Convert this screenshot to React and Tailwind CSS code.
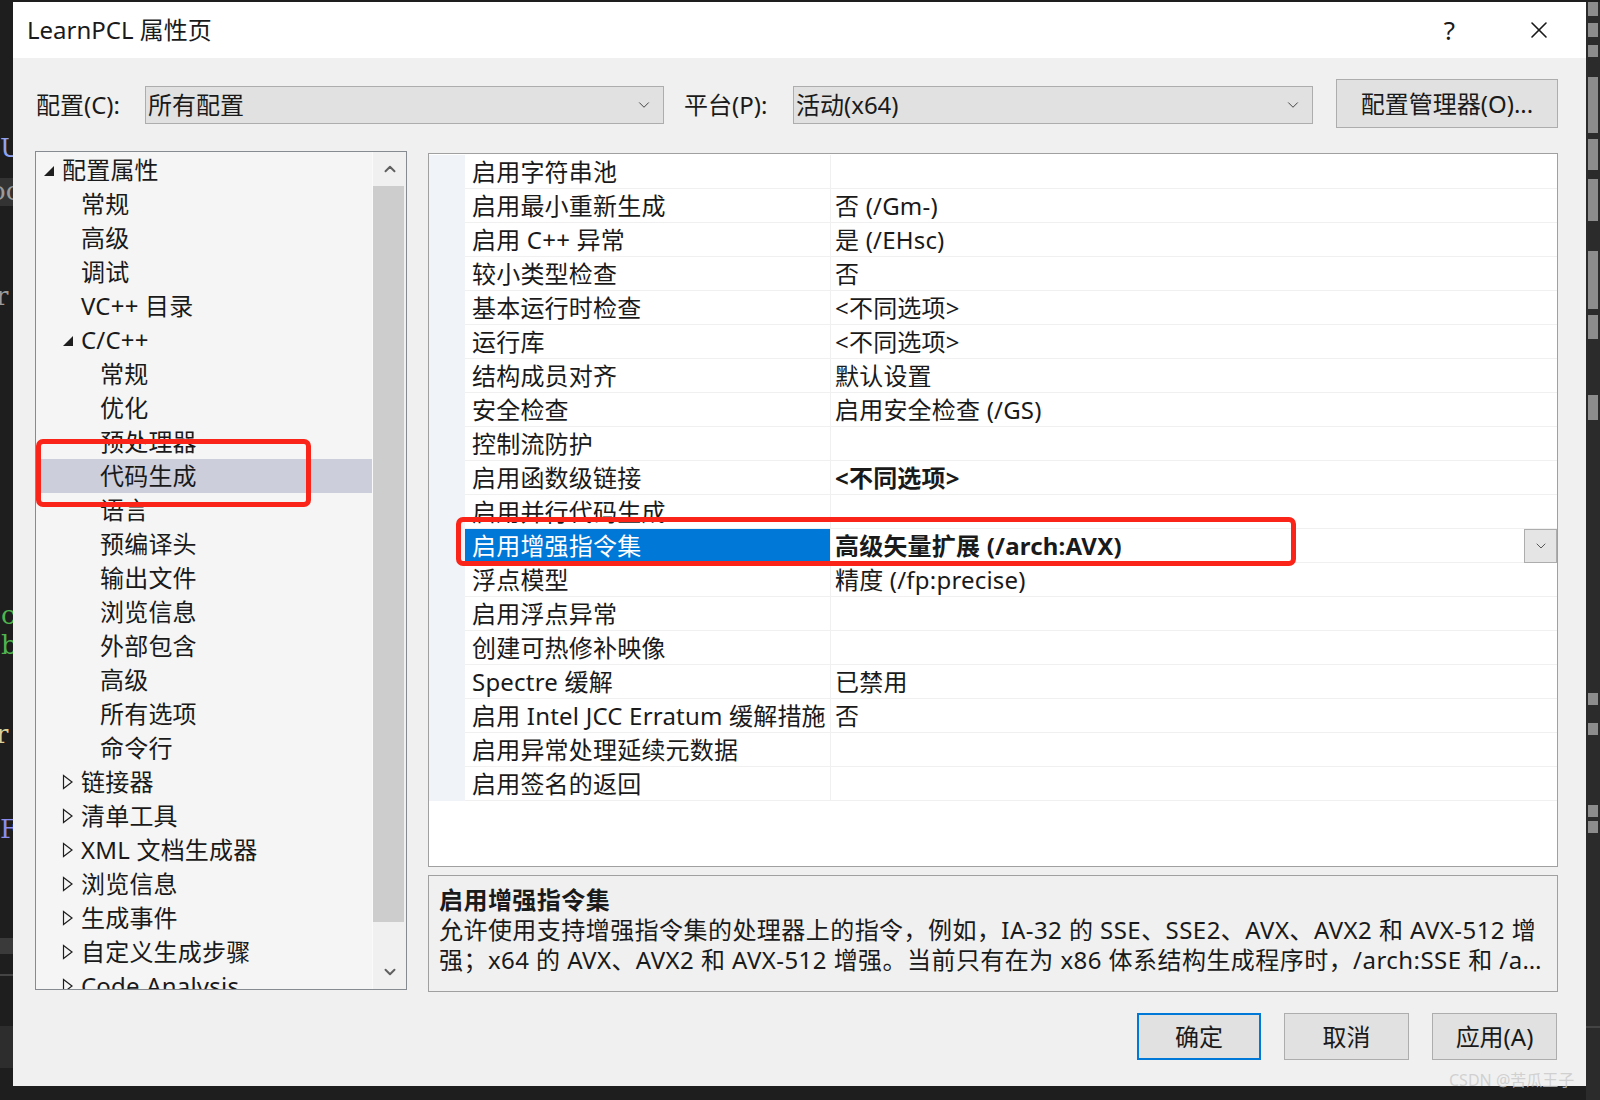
import { ChevronDown, ChevronUp, X } from 'lucide-react';

const TREE = [
  { label: '配置属性', level: 0, toggle: 'open' },
  { label: '常规', level: 1 },
  { label: '高级', level: 1 },
  { label: '调试', level: 1 },
  { label: 'VC++ 目录', level: 1 },
  { label: 'C/C++', level: 1, toggle: 'open' },
  { label: '常规', level: 2 },
  { label: '优化', level: 2 },
  { label: '预处理器', level: 2 },
  { label: '代码生成', level: 2, selected: true },
  { label: '语言', level: 2 },
  { label: '预编译头', level: 2 },
  { label: '输出文件', level: 2 },
  { label: '浏览信息', level: 2 },
  { label: '外部包含', level: 2 },
  { label: '高级', level: 2 },
  { label: '所有选项', level: 2 },
  { label: '命令行', level: 2 },
  { label: '链接器', level: 1, toggle: 'closed' },
  { label: '清单工具', level: 1, toggle: 'closed' },
  { label: 'XML 文档生成器', level: 1, toggle: 'closed' },
  { label: '浏览信息', level: 1, toggle: 'closed' },
  { label: '生成事件', level: 1, toggle: 'closed' },
  { label: '自定义生成步骤', level: 1, toggle: 'closed' },
  { label: 'Code Analysis', level: 1, toggle: 'closed' },
];

const INDENT = ['pl-[7px]', 'pl-[26px]', 'pl-[45px]'];

const PROPS = [
  ['启用字符串池', ''],
  ['启用最小重新生成', '否 (/Gm-)'],
  ['启用 C++ 异常', '是 (/EHsc)'],
  ['较小类型检查', '否'],
  ['基本运行时检查', '<不同选项>'],
  ['运行库', '<不同选项>'],
  ['结构成员对齐', '默认设置'],
  ['安全检查', '启用安全检查 (/GS)'],
  ['控制流防护', ''],
  ['启用函数级链接', '<不同选项>', 'bold'],
  ['启用并行代码生成', ''],
  ['启用增强指令集', '高级矢量扩展 (/arch:AVX)', 'selected'],
  ['浮点模型', '精度 (/fp:precise)'],
  ['启用浮点异常', ''],
  ['创建可热修补映像', ''],
  ['Spectre 缓解', '已禁用'],
  ['启用 Intel JCC Erratum 缓解措施', '否'],
  ['启用异常处理延续元数据', ''],
  ['启用签名的返回', ''],
];

const MARKS = [
  'top-[0px] h-[14px]', 'top-[21px] h-[14px]', 'top-[43px] h-[12px]', 'top-[75px] h-[56px]',
  'top-[137px] h-[31px]', 'top-[177px] h-[42px]', 'top-[249px] h-[58px]', 'top-[313px] h-[24px]',
  'top-[393px] h-[25px]', 'top-[691px] h-[12px]', 'top-[721px] h-[12px]', 'top-[803px] h-[12px]',
  'top-[819px] h-[12px]',
];

function Toggle({ kind }) {
  if (kind === 'open') {
    return (
      <svg width="12" height="12" viewBox="0 0 12 12" className="mt-[2px]">
        <polygon points="11,1 11,11 1,11" fill="#1e1e1e" />
      </svg>
    );
  }
  return (
    <svg width="12" height="16" viewBox="0 0 12 16">
      <polygon points="1.5,1.5 10,8 1.5,14.5" fill="none" stroke="#1e1e1e" strokeWidth="1.2" />
    </svg>
  );
}

function Combo({ value, width }) {
  return (
    <div className={`flex h-[38px] items-center justify-between border border-[#adadad] bg-[#e1e1e1] pl-[2px] pr-[10px] ${width}`}>
      <span>{value}</span>
      <ChevronDown size={18} strokeWidth={1.2} className="text-[#333]" />
    </div>
  );
}

export default function App() {
  return (
    <div className="relative flex h-[1100px] w-[1600px] flex-col overflow-hidden bg-[#1e1e1e] font-['Noto_Sans','Noto_Sans_CJK_SC',sans-serif] text-[24px] text-[#1a1a1a]">
      <div className="h-[2px] shrink-0" />
      <div className="flex">
        <div className="relative h-[1098px] w-[13px] shrink-0 overflow-hidden font-['DejaVu_Serif',serif] text-[26px] leading-none">
          <span className="absolute left-[0px] top-[133px] text-[#8fa3f0]">U</span>
          <div className="absolute left-0 top-[176px] h-[28px] w-[13px] bg-[#333]" />
          <span className="absolute left-[-10px] top-[176px] text-[#9a9a9a]">oc</span>
          <span className="absolute left-[-4px] top-[281px] text-[#9a9a9a]">r</span>
          <span className="absolute left-[1px] top-[600px] text-[#4fb34f]">c</span>
          <span className="absolute left-[1px] top-[630px] text-[#4fb34f]">b</span>
          <span className="absolute left-[-4px] top-[719px] text-[#d8d29a]">r</span>
          <span className="absolute left-[0px] top-[814px] text-[#8a8cf0]">F</span>
          <div className="absolute left-0 top-[936px] h-[16px] w-[13px] bg-[#3a3a3a]" />
          <div className="absolute left-0 top-[972px] h-[2px] w-[13px] bg-[#444]" />
          <div className="absolute left-0 top-[1024px] h-[42px] w-[13px] bg-[#2d2d2d]" />
        </div>

        <div className="flex h-[1084px] w-[1573px] shrink-0 flex-col bg-[#f0f0f0]">
          <div className="flex h-[56px] shrink-0 items-center bg-white pl-[14px]">
            <span className="flex-1">LearnPCL 属性页</span>
            <span className="mr-[70px] text-[26px]">?</span>
            <X size={28} strokeWidth={1.4} className="mr-[33px] text-[#1a1a1a]" />
          </div>

          <div className="mt-[21px] flex h-[49px] items-start pl-[23px]">
            <span className="mt-[7px] w-[109px] leading-[38px]">配置(C):</span>
            <div className="mt-[7px]">
              <Combo value="所有配置" width="w-[519px]" />
            </div>
            <span className="ml-[20px] mt-[7px] w-[109px] leading-[38px]">平台(P):</span>
            <div className="mt-[7px]">
              <Combo value="活动(x64)" width="w-[520px]" />
            </div>
            <button className="ml-[23px] h-[49px] w-[222px] border border-[#adadad] bg-[#e1e1e1]">配置管理器(O)...</button>
          </div>

          <div className="mt-[23px] flex pl-[22px]">
            <div className="flex h-[839px] w-[372px] border border-[#868a91] bg-[#f5f5f5]">
              <div className="flex-1 overflow-hidden pt-[1px]">
                {TREE.map((item, i) => (
                  <div
                    key={i}
                    className={`flex h-[34px] items-center whitespace-nowrap tracking-[0.2px] ${INDENT[item.level]} ${item.selected ? 'bg-[#cccedb]' : ''}`}
                  >
                    <span className="flex w-[19px] shrink-0 items-center">
                      {item.toggle && <Toggle kind={item.toggle} />}
                    </span>
                    <span>{item.label}</span>
                  </div>
                ))}
              </div>
              <div className="flex w-[34px] shrink-0 flex-col border-l border-[#fafafa] bg-[#f0f0f0]">
                <div className="flex h-[34px] items-center justify-center">
                  <ChevronUp size={18} strokeWidth={2.6} className="text-[#606060]" />
                </div>
                <div className="mr-[2px] h-[736px] bg-[#cdcdcd]" />
                <div className="flex flex-1 items-end justify-center pb-[8px]">
                  <ChevronDown size={18} strokeWidth={2.6} className="text-[#606060]" />
                </div>
              </div>
            </div>

            <div className="ml-[21px] flex w-[1130px] flex-col">
              <div className="mt-[2px] h-[714px] border border-[#a0a0a0] bg-white pt-[1px]">
                {PROPS.map(([name, value, flag], i) => (
                  <div key={i} className="flex h-[34px] whitespace-nowrap tracking-[0.2px]">
                    <div className="w-[36px] shrink-0 bg-[#f0f4f9]" />
                    <div
                      className={`flex w-[366px] shrink-0 items-center overflow-hidden border-b border-r border-[#f0f0f0] pl-[7px] ${flag === 'selected' ? 'bg-[#0078d7] text-white' : ''}`}
                    >
                      {name}
                    </div>
                    <div className="flex flex-1 items-center justify-between border-b border-[#f0f0f0] pl-[4px]">
                      <span className={flag ? 'font-bold' : ''}>{value}</span>
                      {flag === 'selected' && (
                        <div className="flex h-[34px] w-[33px] items-center justify-center border border-[#adadad] bg-[#e5e5e5]">
                          <ChevronDown size={16} strokeWidth={1.2} className="text-[#333]" />
                        </div>
                      )}
                    </div>
                  </div>
                ))}
              </div>

              <div className="mt-[8px] flex h-[117px] flex-col border border-[#a0a0a0] px-[10px] pt-[9px] leading-[30px] tracking-[0.45px]">
                <span className="font-bold">启用增强指令集</span>
                <span className="whitespace-nowrap">允许使用支持增强指令集的处理器上的指令，例如，IA-32 的 SSE、SSE2、AVX、AVX2 和 AVX-512 增</span>
                <span className="truncate">强；x64 的 AVX、AVX2 和 AVX-512 增强。当前只有在为 x86 体系结构生成程序时，/arch:SSE 和 /arch:SSE2 选项可用。</span>
              </div>
            </div>
          </div>

          <div className="mt-[21px] flex justify-end gap-[23px] pr-[29px]">
            <button className="h-[47px] w-[124px] border-2 border-[#0078d7] bg-[#e1e1e1]">确定</button>
            <button className="h-[47px] w-[125px] border border-[#adadad] bg-[#e1e1e1]">取消</button>
            <button className="h-[47px] w-[125px] border border-[#adadad] bg-[#e1e1e1]">应用(A)</button>
          </div>
        </div>

        <div className="relative h-[1098px] flex-1 bg-[#2b2b2b]">
          {MARKS.map((m) => (
            <div key={m} className={`absolute left-[2px] w-[10px] bg-[#8c8c8c] ${m}`} />
          ))}
          <div className="absolute left-0 top-[1024px] h-[2px] w-full bg-[#444]" />
        </div>
      </div>

      <div className="pointer-events-none absolute left-[36px] top-[439px] h-[68px] w-[275px] rounded-[7px] border-[5px] border-[#fa2418]" />
      <div className="pointer-events-none absolute left-[456px] top-[517px] h-[49px] w-[840px] rounded-[7px] border-[5px] border-[#fa2418]" />

      <span className="pointer-events-none absolute left-[1449px] top-[1069px] text-[16px] leading-[22px] text-[#c8c8c8]/80">
        CSDN @苦瓜王子
      </span>
    </div>
  );
}
